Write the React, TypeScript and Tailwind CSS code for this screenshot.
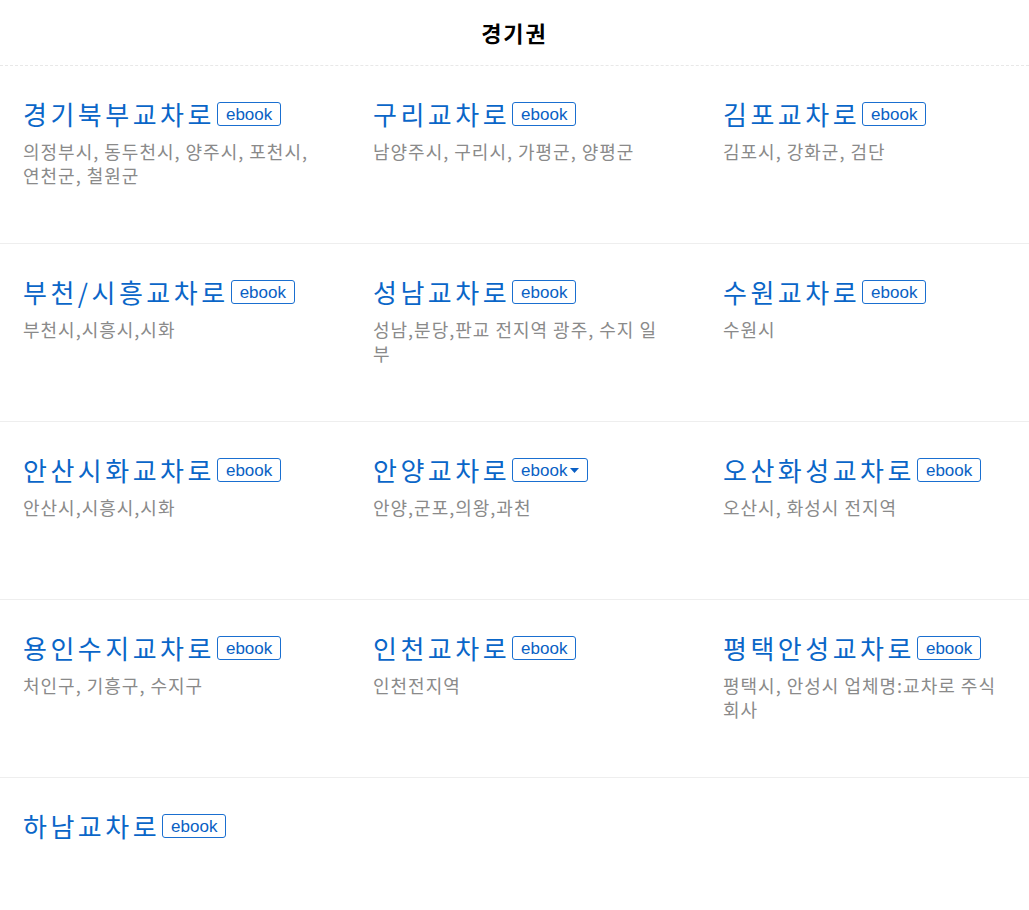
import React from "react";

type Item = { name: string; desc?: string; dropdown?: boolean };

const rows: Item[][] = [
  [
    { name: "경기북부교차로", desc: "의정부시, 동두천시, 양주시, 포천시, 연천군, 철원군" },
    { name: "구리교차로", desc: "남양주시, 구리시, 가평군, 양평군" },
    { name: "김포교차로", desc: "김포시, 강화군, 검단" },
  ],
  [
    { name: "부천/시흥교차로", desc: "부천시,시흥시,시화" },
    { name: "성남교차로", desc: "성남,분당,판교 전지역 광주, 수지 일부" },
    { name: "수원교차로", desc: "수원시" },
  ],
  [
    { name: "안산시화교차로", desc: "안산시,시흥시,시화" },
    { name: "안양교차로", desc: "안양,군포,의왕,과천", dropdown: true },
    { name: "오산화성교차로", desc: "오산시, 화성시 전지역" },
  ],
  [
    { name: "용인수지교차로", desc: "처인구, 기흥구, 수지구" },
    { name: "인천교차로", desc: "인천전지역" },
    { name: "평택안성교차로", desc: "평택시, 안성시 업체명:교차로 주식회사" },
  ],
  [{ name: "하남교차로" }],
];

const font = { fontFamily: '"Noto Sans CJK KR", "Noto Sans", sans-serif' };

function Badge({ dropdown }: { dropdown?: boolean }) {
  return (
    <span className="ml-[2px] inline-flex h-[24px] items-center rounded-[3px] border border-[#1a6fd0] px-[8px] text-[17px] leading-none tracking-normal text-[#0a5fc4] [font-family:'Liberation_Sans',Arial,sans-serif]">
      ebook
      {dropdown && (
        <svg width="9" height="5" viewBox="0 0 9 5" className="ml-[3px]">
          <path d="M0 0 L9 0 L4.5 5 Z" fill="#0a5fc4" />
        </svg>
      )}
    </span>
  );
}

export default function App() {
  return (
    <div className="w-[1029px] overflow-hidden bg-white" style={font}>
      <div className="flex h-[66px] items-center justify-center border-b border-dashed border-[#e8e8e8]">
        <h1 className="text-[22px] font-bold tracking-[2px] text-black">경기권</h1>
      </div>
      {rows.map((row, i) => (
        <div
          key={i}
          className={`flex h-[178px] ${i < rows.length - 1 ? "border-b border-[#eeeeee]" : ""}`}
        >
          {row.map((item) => (
            <div key={item.name} className="w-[350px] shrink-0 pl-[23px] pr-[37px] pt-[30px]">
              <div className="flex h-[36px] items-center">
                <span className="text-[26px] leading-[36px] tracking-[3.5px] text-[#0a66c8]">{item.name}</span>
                <Badge dropdown={item.dropdown} />
              </div>
              {item.desc && (
                <p className="mt-[7px] text-[18px] leading-[24px] tracking-[1px] text-[#8a8a8a]">{item.desc}</p>
              )}
            </div>
          ))}
        </div>
      ))}
    </div>
  );
}
